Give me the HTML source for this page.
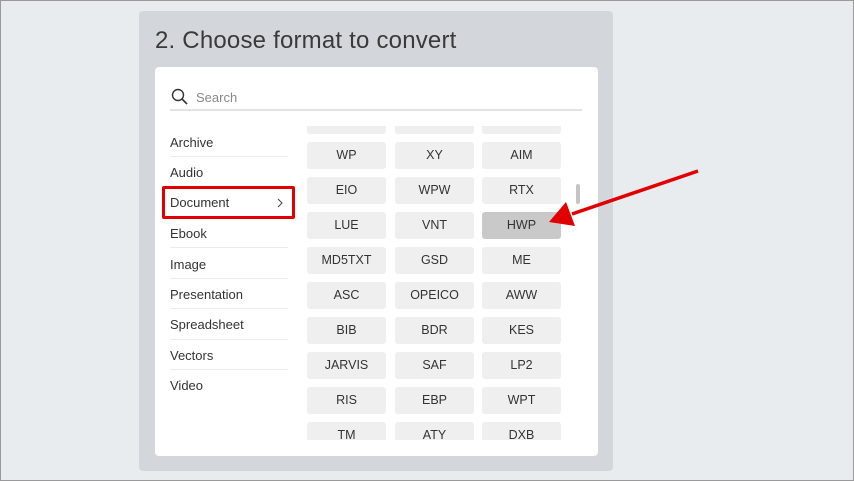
<!DOCTYPE html>
<html><head><style>
*{margin:0;padding:0;box-sizing:border-box}
body{width:854px;height:481px;background:#e9ecef;position:relative;overflow:hidden;font-family:"Liberation Sans",sans-serif}
.frame{position:absolute;left:0;top:0;width:854px;height:481px;border:1px solid #9a9a9a;pointer-events:none}
.outer{position:absolute;left:139px;top:11px;width:474px;height:460px;background:#d3d7dc;border-radius:4px}
.title{position:absolute;left:155px;top:27px;font-size:24px;color:#3a3a3a;letter-spacing:0.2px}
.card{position:absolute;left:155px;top:67px;width:443px;height:389px;background:#fff;border-radius:4px}
.search{position:absolute;left:170px;top:109px;width:412px;height:2px;background:#e3e3e3}
.stext{position:absolute;left:196px;top:90px;font-size:13px;color:#888}
.item{position:absolute;left:170px;font-size:13px;color:#333}
.sep{position:absolute;left:170px;width:118px;height:1px;background:#ececec}
.red{position:absolute;left:162px;top:186px;width:133px;height:33px;border:3px solid #e00000;border-radius:2px}
.grid{position:absolute;left:307px;top:126px;width:260px;height:314px;overflow:hidden}
.b{position:absolute;width:79px;height:27px;background:#efefef;border-radius:3px;font-size:12.5px;color:#333;text-align:center;line-height:27px}
.sb{position:absolute;left:576px;top:184px;width:4px;height:20px;background:#c4c4c4;border-radius:2px}
</style></head><body>
<div class="outer"></div>
<div class="title">2. Choose format to convert</div>
<div class="card"></div>
<svg style="position:absolute;left:171px;top:88px" width="18" height="18" viewBox="0 0 18 18"><circle cx="7" cy="7" r="5.5" fill="none" stroke="#333" stroke-width="1.4"/><line x1="11" y1="11" x2="16" y2="16" stroke="#333" stroke-width="1.6"/></svg>
<div class="stext">Search</div>
<div class="search"></div>
<div class="item" style="top:135px">Archive</div><div class="sep" style="top:156px"></div>
<div class="item" style="top:165px">Audio</div><div class="sep" style="top:186px"></div>
<div class="item" style="top:195px">Document</div>
<svg style="position:absolute;left:276px;top:197px" width="8" height="12" viewBox="0 0 8 12"><polyline points="2,2 6,6 2,10" fill="none" stroke="#444" stroke-width="1"/></svg>
<div class="item" style="top:226px">Ebook</div><div class="sep" style="top:247px"></div>
<div class="item" style="top:257px">Image</div><div class="sep" style="top:278px"></div>
<div class="item" style="top:287px">Presentation</div><div class="sep" style="top:308px"></div>
<div class="item" style="top:317px">Spreadsheet</div><div class="sep" style="top:339px"></div>
<div class="item" style="top:348px">Vectors</div><div class="sep" style="top:369px"></div>
<div class="item" style="top:378px">Video</div>
<div class="red"></div>
<div class="grid">
<div class="b" style="left:0;top:-19px"></div><div class="b" style="left:88px;top:-19px"></div><div class="b" style="left:175px;top:-19px"></div>
<div class="b" style="left:0;top:16px">WP</div><div class="b" style="left:88px;top:16px">XY</div><div class="b" style="left:175px;top:16px">AIM</div>
<div class="b" style="left:0;top:51px">EIO</div><div class="b" style="left:88px;top:51px">WPW</div><div class="b" style="left:175px;top:51px">RTX</div>
<div class="b" style="left:0;top:86px">LUE</div><div class="b" style="left:88px;top:86px">VNT</div><div class="b" style="left:175px;top:86px;background:#c9c9c9">HWP</div>
<div class="b" style="left:0;top:121px">MD5TXT</div><div class="b" style="left:88px;top:121px">GSD</div><div class="b" style="left:175px;top:121px">ME</div>
<div class="b" style="left:0;top:156px">ASC</div><div class="b" style="left:88px;top:156px">OPEICO</div><div class="b" style="left:175px;top:156px">AWW</div>
<div class="b" style="left:0;top:191px">BIB</div><div class="b" style="left:88px;top:191px">BDR</div><div class="b" style="left:175px;top:191px">KES</div>
<div class="b" style="left:0;top:226px">JARVIS</div><div class="b" style="left:88px;top:226px">SAF</div><div class="b" style="left:175px;top:226px">LP2</div>
<div class="b" style="left:0;top:261px">RIS</div><div class="b" style="left:88px;top:261px">EBP</div><div class="b" style="left:175px;top:261px">WPT</div>
<div class="b" style="left:0;top:296px">TM</div><div class="b" style="left:88px;top:296px">ATY</div><div class="b" style="left:175px;top:296px">DXB</div>
</div>
<div class="sb"></div>
<svg style="position:absolute;left:0;top:0" width="854" height="481"><line x1="698" y1="171" x2="572" y2="214" stroke="#e00000" stroke-width="3.5"/><polygon points="549,222 566,202 575,226" fill="#e00000"/></svg>
<div class="frame"></div>
</body></html>
